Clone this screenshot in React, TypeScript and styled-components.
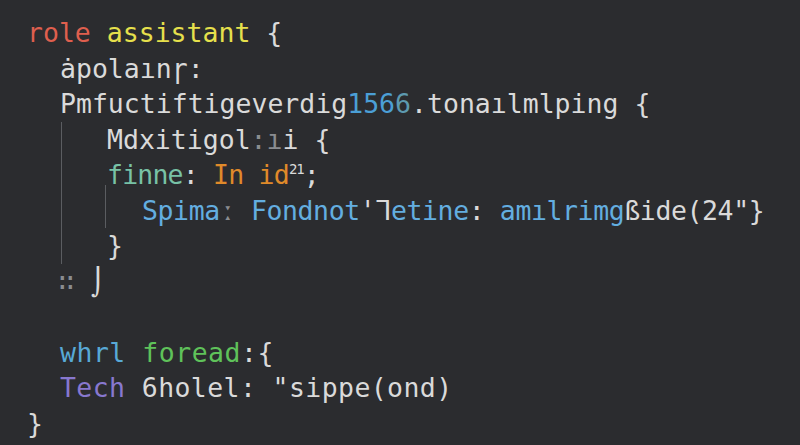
import React from "react";
import styled, { createGlobalStyle } from "styled-components";

const Global = createGlobalStyle`
  html, body { margin: 0; padding: 0; background: #2b2c2f; }
  body { width: 800px; height: 445px; overflow: hidden; }
`;

const Editor = styled.div`
  width: 800px;
  height: 445px;
  box-sizing: border-box;
  background: #2b2c2f;
  padding: 15px 0 0 27px;
  font-family: "DejaVu Sans Mono", "Liberation Mono", monospace;
  font-size: 26.5px;
  line-height: 35.5px;
  color: #dadada;
  white-space: pre;
`;

const Line = styled.div<{ $indent?: number; $track?: number }>`
  height: 35.5px;
  padding-left: ${(p) => p.$indent ?? 0}px;
  letter-spacing: ${(p) => p.$track ?? 0}px;
`;

const Guide = styled.div<{ $left: number; $lift?: number }>`
  margin-left: ${(p) => p.$left}px;
  border-left: 1px solid #5b5d61;
  margin-top: ${(p) => -(p.$lift ?? 0)}px;
  padding-top: ${(p) => p.$lift ?? 0}px;
`;

const Tok = styled.span<{ $c: string }>`
  color: ${(p) => p.$c};
`;

const Sup = styled.span`
  font-size: 14px;
  vertical-align: 10px;
  line-height: 0;
  letter-spacing: -1px;
  color: #dadada;
`;

const Faint = styled.span`
  color: #8a8c90;
`;

const C = {
  red: "#df5f4e",
  yellow: "#e6e04c",
  num: "#4b9fd6",
  numDim: "#5d9ab0",
  teal: "#78c2a6",
  orange: "#e08a2a",
  blue: "#63aee0",
  blue2: "#58a9d6",
  green: "#5fc25a",
  purple: "#8878cf",
};

export default function App() {
  return (
    <>
      <Global />
      <Editor>
        <Line>
          <Tok $c={C.red}>role</Tok> <Tok $c={C.yellow}>assistant</Tok> {"{"}
        </Line>
        <Line $indent={33}>ȧpolaınɼ:</Line>
        <Line $indent={33}>
          Pmfuctiftigeverdig<Tok $c={C.num}>156</Tok>
          <Tok $c={C.numDim}>6</Tok>.tonaılmlping {"{"}
        </Line>
        <Guide $left={34}>
          <Line $indent={45}>
            Mdxitigol<Faint>:ı</Faint>i {"{"}
          </Line>
          <Line $indent={45} $track={-0.8}>
            <Tok $c={C.teal}>finne</Tok>: <Tok $c={C.orange}>In id</Tok>
            <Sup>21</Sup>;
          </Line>
          <Guide $left={43} $lift={8}>
            <Line $indent={36} $track={-0.4}>
              <Tok $c={C.blue}>Spima</Tok>
              <Faint>ː</Faint> <Tok $c={C.blue}>Fondnot</Tok>'ᒣ
              <Tok $c={C.blue}>etine</Tok>: <Tok $c={C.blue}>amılrimg</Tok>ßide(24"{"}"}
            </Line>
          </Guide>
          <Line $indent={45}>{"}"}</Line>
        </Guide>
        <Line $indent={31}>
          <Faint>∷</Faint> ⌡
        </Line>
        <Line />
        <Line $indent={33} $track={0.5}>
          <Tok $c={C.blue2}>whrl</Tok> <Tok $c={C.green}>foread</Tok>:{"{"}
        </Line>
        <Line $indent={33} $track={0.4}>
          <Tok $c={C.purple}>Tech</Tok> 6holel: "sippe(ond)
        </Line>
        <Line>{"}"}</Line>
      </Editor>
    </>
  );
}
